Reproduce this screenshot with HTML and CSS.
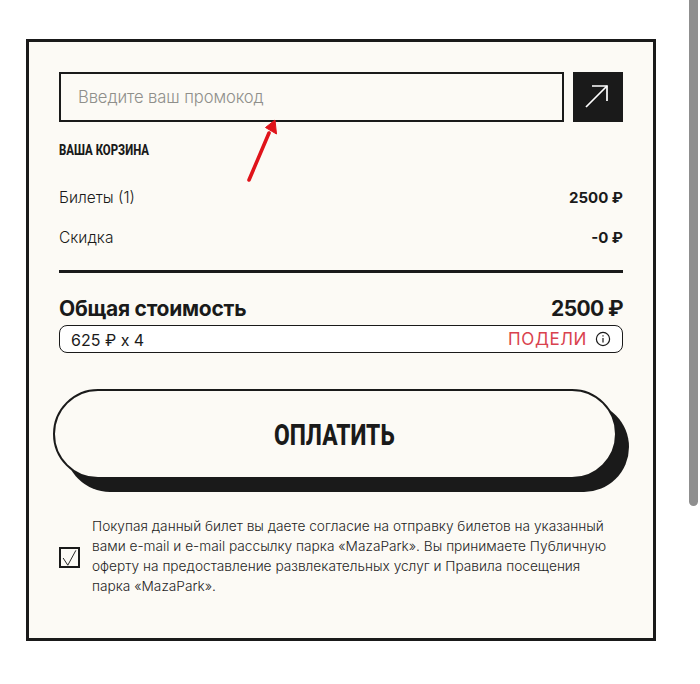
FILE: index.html
```html
<!DOCTYPE html>
<html lang="ru">
<head>
<meta charset="utf-8">
<title>Корзина</title>
<link rel="stylesheet" href="styles.css">
</head>
<body>
<main class="card">
  <form class="promo">
    <div class="promo-input">Введите ваш промокод</div>
    <div class="promo-btn">
      <svg viewBox="0 0 50 50" width="50" height="50" fill="none" stroke="#fff" stroke-width="1.7">
        <path d="M13 35 L34 14"/>
        <path d="M19 14 H34 V29" />
      </svg>
    </div>
  </form>
  <h2 class="cart-title">ВАША КОРЗИНА</h2>
  <div class="row row-first"><span>Билеты (1)</span><b>2500 ₽</b></div>
  <div class="row row-second"><span>Скидка</span><b>-0 ₽</b></div>
  <div class="rule"></div>
  <div class="total"><span>Общая стоимость</span><span class="total-sum">2500 ₽</span></div>
  <div class="split">
    <span class="split-text">625 ₽ x 4</span>
    <span class="split-right">
      <span class="podeli">ПОДЕЛИ</span>
      <svg viewBox="0 0 16 16" width="16" height="16" fill="none" stroke="#1a1a1a" stroke-width="1.2">
        <circle cx="8" cy="8" r="6.6"/>
        <path d="M8 7 V11.6"/>
        <path d="M8 4.2 V5.6"/>
      </svg>
    </span>
  </div>
  <button class="pay" type="button"><span class="pay-label">ОПЛАТИТЬ</span></button>
  <div class="consent">
    <div class="checkbox">
      <svg viewBox="0 0 20 20" width="18" height="18" fill="none" stroke="#1a1a1a" stroke-width="1.1">
        <path d="M2.5 10 L8 18.5 L17.5 1"/>
      </svg>
    </div>
    <p>Покупая данный билет вы даете согласие на отправку билетов на указанный вами e-mail и e-mail рассылку парка «MazaPark». Вы принимаете Публичную оферту на предоставление развлекательных услуг и Правила посещения парка «MazaPark».</p>
  </div>
  <svg class="annotation" viewBox="0 0 40 70" width="40" height="70">
    <path d="M6 67 L26 20" stroke="#e0131a" stroke-width="3.6" stroke-linecap="round" fill="none"/>
    <path d="M32 7 L33.5 21 L22.5 14.5 Z" fill="#e0131a" stroke="#e0131a" stroke-width="1" stroke-linejoin="round"/>
  </svg>
</main>
<div class="scrollbar"></div>
</body>
</html>
```
FILE: styles.css
```css
* { box-sizing: border-box; }
html, body { margin: 0; padding: 0; background: #fff; }
body {
  height: 684px;
  overflow: hidden;
  font-family: "Inter", "Noto Sans", sans-serif;
  color: #1a1a1a;
}
.card {
  position: relative;
  width: 630px;
  height: 602px;
  margin: 39px 0 0 26px;
  padding: 30px 30px 0 30px;
  border: 3px solid #1a1a1a;
  background: #fcfaf5;
}
.promo { display: flex; gap: 9px; }
.promo-input {
  flex: 1;
  height: 50px;
  border: 2px solid #1a1a1a;
  padding-left: 17px;
  display: flex;
  align-items: center;
  font-size: 16.6px;
  font-weight: 300;
  letter-spacing: -0.1px;
  color: #8f8f8b;
}
.promo-btn {
  width: 50px;
  height: 50px;
  background: #1a1a1a;
}
.promo-btn svg { display: block; }
.cart-title {
  margin: 20px 0 0;
  font-family: "Roboto", sans-serif;
  font-weight: 800;
  font-size: 15px;
  line-height: 16px;
  transform: scaleX(0.76);
  transform-origin: left center;
}
.row {
  display: flex;
  justify-content: space-between;
  font-size: 15.5px;
  line-height: 20px;
  font-weight: 300;
}
.row b { font-weight: 700; font-size: 15px; }
.row-first { margin-top: 30px; }
.row-second { margin-top: 20px; }
.rule { height: 3px; background: #1a1a1a; margin-top: 22px; }
.total {
  display: flex;
  justify-content: space-between;
  margin-top: 23px;
  font-size: 21px;
  line-height: 26px;
  font-weight: 700;
  letter-spacing: -0.25px;
}
.total-sum { letter-spacing: -0.6px; }
.split {
  display: flex;
  justify-content: space-between;
  align-items: center;
  height: 28px;
  margin-top: 3px;
  padding: 0 11px;
  background: #fff;
  border: 1px solid #1a1a1a;
  border-radius: 8px;
  font-size: 16px;
}
.split-text { position: relative; top: 1px; }
.split-right { display: flex; align-items: center; gap: 8px; }
.split-right svg { display: block; }
.podeli {
  color: #d9424e;
  font-size: 17px;
  letter-spacing: 0.6px;
  font-weight: 400;
}
.pay {
  display: block;
  width: 564px;
  height: 90px;
  margin: 36px 0 0 -6px;
  padding: 1px 2px 0 0;
  background: #fcfaf5;
  border: 2px solid #1a1a1a;
  border-radius: 45px;
  box-shadow: 12px 13px 0 #1a1a1a;
  font-family: "Roboto", sans-serif;
  font-weight: 800;
  font-size: 30px;
  color: #1a1a1a;
}
.pay-label { display: inline-block; transform: scaleX(0.76); }
.consent {
  display: flex;
  align-items: center;
  gap: 12px;
  margin-top: 37px;
}
.checkbox {
  flex: none;
  width: 21px;
  height: 21px;
  margin-top: 3px;
  border: 2px solid #1a1a1a;
  display: flex;
  align-items: center;
  justify-content: center;
}
.consent p {
  margin: 0;
  font-size: 13.7px;
  line-height: 20px;
  font-weight: 300;
  color: #1f1f1f;
  width: 525px;
}
.annotation {
  position: absolute;
  left: 214px;
  top: 71px;
}
.scrollbar {
  position: fixed;
  left: 689px;
  top: 0;
  width: 9px;
  height: 506px;
  background: #8f8f8f;
  border-radius: 0 0 5px 5px;
}
```
